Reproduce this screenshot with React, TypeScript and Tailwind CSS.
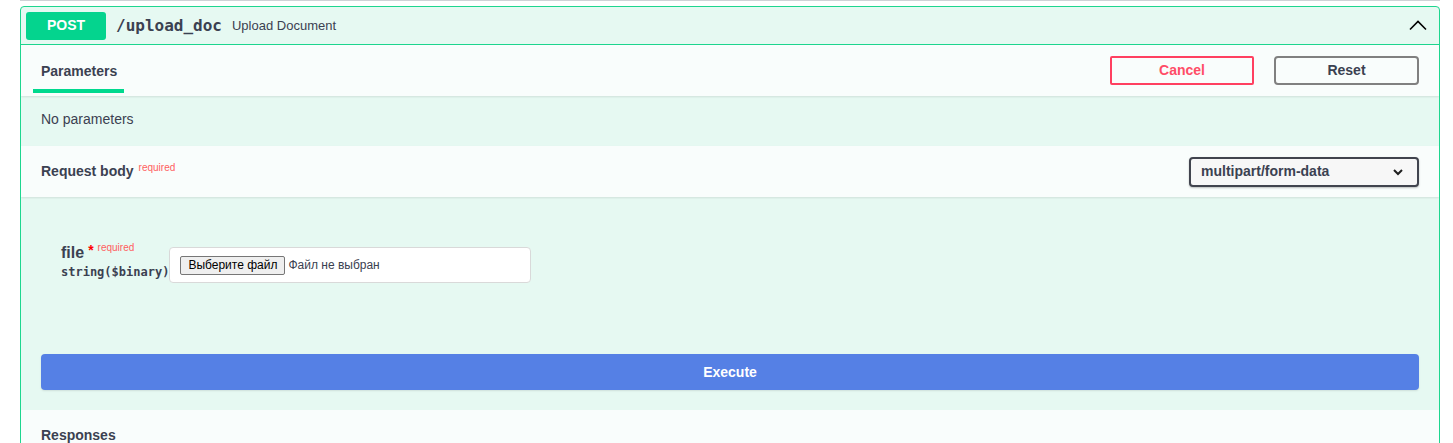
import React from 'react';

const sans = "font-['Liberation_Sans',Arial,sans-serif]";
const mono = "font-['DejaVu_Sans_Mono',monospace]";

function ChevronUp() {
  return (
    <svg width="20" height="20" viewBox="0 0 20 20" className="text-black">
      <polyline points="2,13.5 10,5.5 18,13.5" fill="none" stroke="currentColor" strokeWidth="1.6" />
    </svg>
  );
}

function ChevronDown() {
  return (
    <svg width="12" height="8" viewBox="0 0 12 8">
      <polyline points="2,2 6,6 10,2" fill="none" stroke="#1f1f1f" strokeWidth="2" />
    </svg>
  );
}

export default function App() {
  return (
    <div className={`${sans} bg-white min-h-[443px] text-[#3b4151]`}>
      <div className="ml-[20px] w-[1420px] h-px bg-[#cfd2d6]" />
      <div className="ml-[20px] w-[1420px] mt-[5px] border border-[#1ed68f] rounded-[4px] bg-[#e6f9f2] overflow-hidden">
        {/* summary */}
        <div className="flex items-center h-[38px] px-[5px] border-b border-[#1ed68f]">
          <span className="w-[80px] h-[28px] rounded-[3px] bg-[#04d48e] text-white font-bold text-[14px] flex items-center justify-center">
            POST
          </span>
          <span className={`${mono} ml-[10px] font-bold text-[16px] text-[#3b4151]`}>/upload_doc</span>
          <span className="ml-[10px] text-[13px] text-[#3b4151]">Upload Document</span>
          <span className="ml-auto mr-[6px] flex items-center">
            <ChevronUp />
          </span>
        </div>

        {/* parameters tab header */}
        <div className="flex items-center h-[51px] px-[20px] bg-[#f9fdfc] shadow-[0_1px_2px_rgba(0,0,0,0.1)] relative z-10">
          <div className="relative h-full flex items-center">
            <span className="font-bold text-[14px] mt-[1px]">Parameters</span>
            <span className="absolute left-[-8px] right-[-7px] bottom-[3px] h-[4px] bg-[#00d98e]" />
          </div>
          <div className="ml-auto flex items-center gap-[20px]">
            <button className="w-[144px] h-[29px] border-2 border-[#ff4060] rounded-[2px] bg-transparent text-[#ff4d67] font-bold text-[14px]">
              Cancel
            </button>
            <button className="w-[145px] h-[29px] border-2 border-[#808080] rounded-[4px] bg-transparent text-[#3b4151] font-bold text-[14px]">
              Reset
            </button>
          </div>
        </div>

        {/* no parameters */}
        <div className="h-[50px] px-[20px] flex items-center text-[14px]">
          <span className="mt-[-4px]">No parameters</span>
        </div>

        {/* request body header */}
        <div className="flex items-center h-[51px] px-[20px] bg-[#f9fdfc] shadow-[0_1px_2px_rgba(0,0,0,0.1)] relative z-10">
          <span className="font-bold text-[14px]">Request body</span>
          <span className="ml-[5px] mt-[-8px] text-[10px] text-[#ff6060]">required</span>
          <div className="ml-auto mr-0 w-[230px] h-[30px] border-2 border-[#41444e] rounded-[4px] bg-[#f7f7f7] shadow-[0_1px_2px_rgba(0,0,0,0.25)] flex items-center pl-[10px] pr-[13px]">
            <span className="font-bold text-[14px]">multipart/form-data</span>
            <span className="ml-auto flex items-center"><ChevronDown /></span>
          </div>
        </div>

        {/* body */}
        <div className="px-[20px] pt-[45px] pb-[20px]">
          <div className="flex items-start pl-[20px]">
            <div className="flex flex-col">
              <div className="flex items-start h-[21px]">
                <span className="font-bold text-[16px] leading-[20px] mt-[1px]">file</span>
                <span className="ml-[4px] text-[#ff0000] font-bold text-[14px] leading-[14px] mt-[1px]">*</span>
                <span className="ml-[4px] text-[10px] leading-[12px] mt-[0px] text-[#ff6060]">required</span>
              </div>
              <span className={`${mono} font-bold text-[12px] text-[#3b4151] mt-[0px]`}>string($binary)</span>
            </div>
            <div className="mt-[5px] w-[362px] h-[36px] bg-white border border-[#d9d9d9] rounded-[4px] flex items-center pl-[10px]">
              <span className="h-[19px] px-[7px] flex items-center border border-[#767676] rounded-[2px] bg-[#efefef] text-[12px] text-black">
                Выберите файл
              </span>
              <span className="ml-[3px] text-[12px] text-[#3b4151]">Файл не выбран</span>
            </div>
          </div>
          <button className="mt-[71px] w-full h-[36px] rounded-[4px] bg-[#5580e5] text-white font-bold text-[14px] shadow-[0_1px_2px_rgba(0,0,0,0.1)]">
            Execute
          </button>
        </div>

        {/* responses */}
        <div className="h-[60px] px-[20px] pt-[13px] bg-[#f9fdfc]">
          <span className="font-bold text-[14px]">Responses</span>
        </div>
      </div>
    </div>
  );
}
